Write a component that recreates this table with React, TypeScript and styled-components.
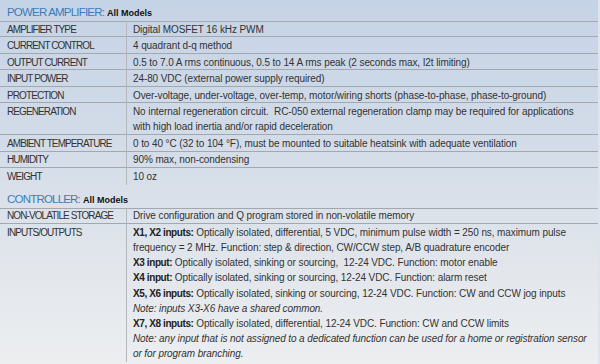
import * as React from "react";
import styled, { createGlobalStyle } from "styled-components";

const GlobalStyle = createGlobalStyle`
  html, body {
    margin: 0;
    padding: 0;
  }
`;

const fontStack = `"Liberation Sans", Arial, sans-serif`;
const rule = "#a3a8ae";

const Page = styled.div`
  width: 600px;
  height: 364px;
  overflow: hidden;
  box-sizing: border-box;
  border-right: 2px solid #dde4ee;
  background: linear-gradient(180deg, #c5d3e6 0%, #d3dce8 40%, #e3e7ec 75%, #eceef0 100%);
  font-family: ${fontStack};
  color: #333;
  font-size: 10px;
`;

const Section = styled.div<{ $gap?: number }>`
  margin-top: ${p => p.$gap || 0}px;
`;

const Title = styled.div`
  height: 21px;
  box-sizing: border-box;
  padding: 4px 0 0 7px;
  line-height: 17px;
  color: #3b7db9;
  font-size: 11.5px;
  letter-spacing: -0.8px;
  white-space: nowrap;
`;

const Models = styled.span`
  color: #111;
  font-weight: 700;
  font-size: 9px;
  letter-spacing: 0;
  margin-left: 3px;
`;

const Table = styled.div`
  box-shadow: inset 0 1px 0 ${rule};
`;

const Row = styled.div<{ $last?: boolean }>`
  display: grid;
  grid-template-columns: 127px 1fr;
  padding: 0.65px 0;
  line-height: 15.2px;
  box-shadow: ${p => (p.$last ? "none" : `inset 0 -1px 0 ${rule}`)};
`;

const Label = styled.div`
  padding-left: 7px;
  margin: -0.65px 0;
  padding-top: 0.65px;
  border-right: 1px solid #b4b8bd;
  white-space: nowrap;
  letter-spacing: -0.9px;
`;

const Value = styled.div`
  padding-left: 6px;
  white-space: nowrap;
  letter-spacing: -0.1px;
`;

const B = styled.b`
  color: #222;
  letter-spacing: -0.4px;
`;

const Note = styled.i``;

const power: [string, React.ReactNode][] = [
  ["AMPLIFIER TYPE", "Digital MOSFET 16 kHz PWM"],
  ["CURRENT CONTROL", "4 quadrant d-q method"],
  ["OUTPUT CURRENT", "0.5 to 7.0 A rms continuous, 0.5 to 14 A rms peak (2 seconds max, I2t limiting)"],
  ["INPUT POWER", "24-80 VDC (external power supply required)"],
  ["PROTECTION", "Over-voltage, under-voltage, over-temp, motor/wiring shorts (phase-to-phase, phase-to-ground)"],
  [
    "REGENERATION",
    <>
      No internal regeneration circuit.&nbsp; RC-050 external regeneration clamp may be required for applications
      <br />
      with high load inertia and/or rapid deceleration
    </>
  ],
  ["AMBIENT TEMPERATURE", "0 to 40 °C (32 to 104 °F), must be mounted to suitable heatsink with adequate ventilation"],
  ["HUMIDITY", "90% max, non-condensing"],
  ["WEIGHT", "10 oz"]
];

const io = (
  <>
    <B>X1, X2 inputs:</B> Optically isolated, differential, 5 VDC, minimum pulse width = 250 ns, maximum pulse
    <br />
    frequency = 2 MHz. Function: step &amp; direction, CW/CCW step, A/B quadrature encoder
    <br />
    <B>X3 input:</B> Optically isolated, sinking or sourcing,&nbsp; 12-24 VDC. Function: motor enable
    <br />
    <B>X4 input:</B> Optically isolated, sinking or sourcing, 12-24 VDC. Function: alarm reset
    <br />
    <B>X5, X6 inputs:</B> Optically isolated, sinking or sourcing, 12-24 VDC. Function: CW and CCW jog inputs
    <br />
    <Note>Note: inputs X3-X6 have a shared common.</Note>
    <br />
    <B>X7, X8 inputs:</B> Optically isolated, differential, 12-24 VDC. Function: CW and CCW limits
    <br />
    <Note>
      Note: any input that is not assigned to a dedicated function can be used for a home or registration sensor
      <br />
      or for program branching.
    </Note>
  </>
);

const controller: [string, React.ReactNode][] = [
  ["NON-VOLATILE STORAGE", "Drive configuration and Q program stored in non-volatile memory"],
  ["INPUTS/OUTPUTS", io]
];

const SpecTable = ({ rows }: { rows: [string, React.ReactNode][] }) => (
  <Table>
    {rows.map(([label, value], i) => (
      <Row key={label} $last={i === rows.length - 1}>
        <Label>{label}</Label>
        <Value>{value}</Value>
      </Row>
    ))}
  </Table>
);

export default function App() {
  return (
    <Page>
      <GlobalStyle />
      <Section>
        <Title>
          POWER AMPLIFIER:<Models>All Models</Models>
        </Title>
        <SpecTable rows={power} />
      </Section>
      <Section $gap={2}>
        <Title>
          CONTROLLER:<Models>All Models</Models>
        </Title>
        <SpecTable rows={controller} />
      </Section>
    </Page>
  );
}
